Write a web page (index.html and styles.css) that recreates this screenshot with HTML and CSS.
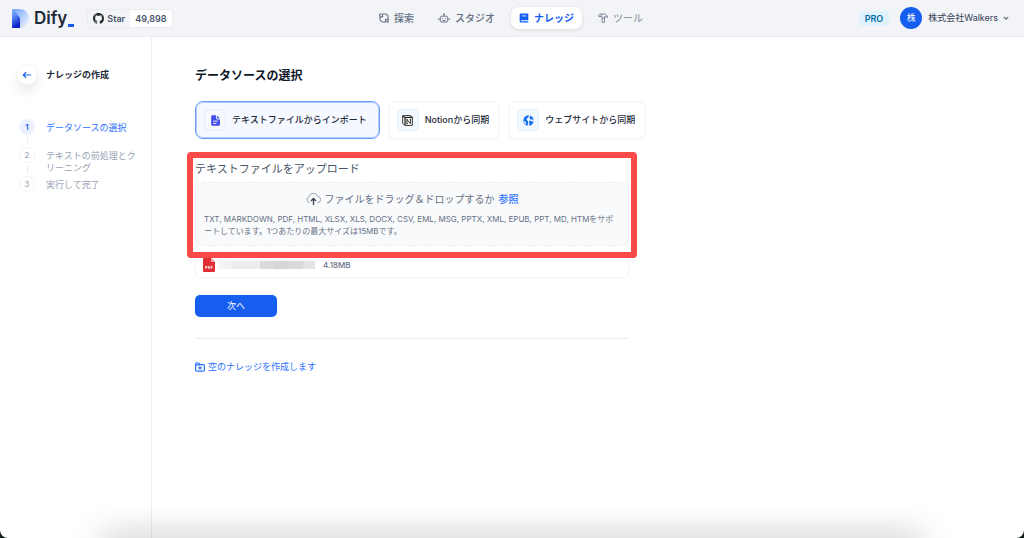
FILE: index.html
```html
<!DOCTYPE html>
<html lang="ja">
<head>
<meta charset="utf-8">
<meta name="viewport" content="width=device-width, initial-scale=1">
<title>ナレッジの作成 - Dify</title>
<link rel="stylesheet" href="styles.css">
</head>
<body>
<div class="app">
  <header class="header">
    <div class="header-side">
      <a class="logo" href="#">
        <svg class="logo-mark" viewBox="0 0 17 19" aria-hidden="true">
          <defs>
            <linearGradient id="lg1" x1="0" y1="0" x2="1" y2=".8"><stop offset="0" stop-color="#6f9ff8"/><stop offset=".5" stop-color="#a9c6fb"/><stop offset="1" stop-color="#eef3fc"/></linearGradient>
            <linearGradient id="lg2" x1="0" y1="0" x2=".3" y2="1"><stop offset="0" stop-color="#8fb5fa"/><stop offset=".45" stop-color="#5583f2"/><stop offset="1" stop-color="#0a22c8"/></linearGradient>
          </defs>
          <path d="M0 0h8a9 9 0 0 1 9 9.500a9 9 0 0 1-9 9.500z" fill="url(#lg1)"/>
          <path d="M0 0h1l7 9v10H0z" fill="url(#lg2)"/>
        </svg>
        <span class="logo-text">Dify</span><span class="logo-dash"></span>
      </a>
      <a class="star" href="#">
        <span class="star-label">
          <svg class="icon-github" viewBox="0 0 16 16" fill="#24292f" aria-hidden="true"><path d="M8 0C3.580 0 0 3.580 0 8c0 3.540 2.290 6.530 5.470 7.590.4.070.55-.17.55-.38 0-.19-.01-.82-.01-1.490-2.010.37-2.530-.49-2.690-.94-.09-.23-.48-.94-.82-1.130-.28-.15-.68-.52-.01-.53.63-.01 1.080.58 1.230.82.72 1.210 1.870.87 2.330.66.070-.52.28-.87.51-1.070-1.780-.2-3.640-.89-3.640-3.950 0-.87.31-1.590.82-2.150-.08-.2-.36-1.020.08-2.120 0 0 .67-.21 2.200.82.64-.18 1.320-.27 2-.27s1.360.09 2 .27c1.530-1.040 2.200-.82 2.200-.82.44 1.100.16 1.920.08 2.120.51.56.82 1.270.82 2.150 0 3.070-1.870 3.750-3.650 3.950.29.25.54.73.54 1.480 0 1.070-.01 1.930-.01 2.200 0 .21.15.46.55.38A8 8 0 0 0 16 8c0-4.420-3.580-8-8-8z"/></svg>
          Star
        </span>
        <span class="star-count">49,898</span>
      </a>
    </div>
    <nav class="nav">
      <a class="nav-item" href="#">
        <svg class="icon" viewBox="0 0 12 12" fill="none" stroke="currentColor" stroke-width="1.300" aria-hidden="true"><path d="M4 1.200h3.500a3.300 3.300 0 0 1 3.300 3.300V8.300M8.300 10.800H5A3.800 3.800 0 0 1 1.200 7V4.500"/><path d="M1 1.500c1.500-.8 3.500.5 3.500 2.500L2.200 5.200C.7 4 .3 2.500 1 1.500zM11.200 10.800L7.600 10.300 7.900 7.800l2.600-.3z"/></svg>
        探索
      </a>
      <a class="nav-item" href="#">
        <svg class="icon icon-wide" viewBox="0 0 14 12" fill="none" stroke="currentColor" stroke-width="1.200" aria-hidden="true"><rect x="2.500" y="3.800" width="9" height="7" rx="1.800"/><path d="M7 3.800V1.500M5.800 1.200h2.400M.8 6.300v2.200M13.200 6.300v2.200M5 6.200v1.200M9 6.200v1.200M5.500 9h3"/></svg>
        スタジオ
      </a>
      <a class="nav-item nav-active" href="#">
        <svg class="icon" viewBox="0 0 12 12" aria-hidden="true"><path d="M2.200.6h9v8.200H2.600a.5.5 0 0 0 0 1h8.600v1.600H2.300A1.600 1.600 0 0 1 .8 9.800V2A1.400 1.400 0 0 1 2.200.6z" fill="currentColor"/><path d="M4 3.500h4.500" stroke="#fff"/></svg>
        ナレッジ
      </a>
      <a class="nav-item nav-muted" href="#">
        <svg class="icon" viewBox="0 0 12 12" fill="none" stroke="currentColor" stroke-width="1.200" aria-hidden="true"><path d="M1 4.300V2.500L2.500 1.300h6L11.200 3.500v1.800L8.500 4.300H7.800v6.900H4.900V4.300zM3.800 1.300v3M5 6.300h2.800"/></svg>
        ツール
      </a>
    </nav>
    <div class="header-side header-right">
      <span class="plan">PRO</span>
      <button class="account" type="button">
        <span class="avatar">株</span>
        <span>株式会社Walkers</span>
        <svg class="icon-chevron" viewBox="0 0 8 8" fill="none" stroke="#667085" stroke-width="1.200" aria-hidden="true"><path d="M1.800 3L4 5.200 6.200 3"/></svg>
      </button>
    </div>
  </header>

  <div class="body">
    <aside class="sidebar">
      <div class="sidebar-head">
        <button class="back" type="button" aria-label="戻る">
          <svg class="icon" viewBox="0 0 12 12" fill="none" stroke="#155eef" stroke-width="1.400" aria-hidden="true"><path d="M11 6H1.500M5 2.500L1.500 6L5 9.500"/></svg>
        </button>
        <h2 class="sidebar-title">ナレッジの作成</h2>
      </div>
      <ol class="steps">
        <li class="step step-current"><span class="step-number">1</span><span class="step-text">データソースの選択</span></li>
        <li class="step"><span class="step-number">2</span><span class="step-text">テキストの前処理とクリーニング</span></li>
        <li class="step"><span class="step-number">3</span><span class="step-text">実行して完了</span></li>
      </ol>
    </aside>

    <main class="main">
      <h1 class="title">データソースの選択</h1>
      <div class="sources">
        <button class="source source-selected" type="button">
          <span class="source-icon source-icon-file"><svg viewBox="0 0 12 12" aria-hidden="true"><path d="M2.800.300h3.700v3a1.500 1.500 0 0 0 1.500 1.500h2.800v5.500a1.500 1.500 0 0 1-1.500 1.500H2.800a1.500 1.500 0 0 1-1.500-1.500V1.800A1.500 1.500 0 0 1 2.800.3zM7.500.5l3.200 3.200H7.500z" fill="#444ce7"/><path d="M3.500 6.700h5M3.500 9.200h3.500" stroke="#fff"/></svg></span>
          テキストファイルからインポート
        </button>
        <button class="source" type="button">
          <span class="source-icon"><svg viewBox="0 0 12 12" aria-hidden="true"><path d="M.7.900L8.500.4l2.800 2v8.800l-7.900.5L.7 9z" fill="#fff" stroke="#222"/><path d="M.7.900l2.600 2 8-.5M3.300 2.900v8.600" fill="none" stroke="#222" stroke-width="1.400"/><path d="M5.500 9.700V5l3.700 4.300V4.500M4.800 5.100h1.300M8.500 4.500h1.500M4.800 9.600h1.400" fill="none" stroke="#222"/></svg></span>
          Notionから同期
        </button>
        <button class="source" type="button">
          <span class="source-icon"><svg viewBox="0 0 12 12" aria-hidden="true"><circle cx="6" cy="6" r="5.600" fill="#1570ef"/><path d="M6.500 0L6 2.500 4.200 3.800 4 5.500l1.500 1.300L5.700 9 4.800 11.800 6.700 12 7 9.500 6.500 7 7.500 6l2.500 1 1.700-.5V5.300L9.500 5 7.500 4.500 7.200 2.500 8 .3zM.5 6.500l2 .5.8 1.500-.5 2" fill="#eff8ff"/></svg></span>
          ウェブサイトから同期
        </button>
      </div>

      <section class="upload">
        <div class="upload-frame">
          <h2 class="upload-label">テキストファイルをアップロード</h2>
          <div class="dropzone">
            <div class="drop-line">
              <svg class="icon-cloud" viewBox="0 0 15 14" fill="none" aria-hidden="true"><path d="M4 10.500H3.500A3 3 0 0 1 3 4.700 4.600 4.600 0 0 1 11.800 4.500 3 3 0 0 1 11.500 10.500H11" stroke="#98a2b3"/><path d="M7.500 13V6.500M5 9l2.500-2.500L10 9" stroke="#344054" stroke-width="1.300"/></svg>
              <span>ファイルをドラッグ＆ドロップするか</span>
              <a class="browse" href="#">参照</a>
            </div>
            <p class="drop-hint">TXT, MARKDOWN, PDF, HTML, XLSX, XLS, DOCX, CSV, EML, MSG, PPTX, XML, EPUB, PPT, MD, HTMをサポートしています。1つあたりの最大サイズは15MBです。</p>
          </div>
        </div>
        <div class="file">
          <svg class="icon-pdf" viewBox="0 0 12 14" aria-hidden="true"><path d="M1 0h7l4 4v9a1 1 0 0 1-1 1H1a1 1 0 0 1-1-1V1a1 1 0 0 1 1-1z" fill="#e02f32"/><path d="M8 0l4 4H8z" fill="#f4a5a6"/><path d="M2.700 10.800V8.300h1.200v1.200H2.700M5.400 8.300v2.200h.7q.7 0 .7-1.100T6.100 8.300zM8.200 10.800V8.300h1.500M8.200 9.600h1.200" fill="none" stroke="#fff" stroke-width=".8"/></svg>
          <span class="file-name"></span>
          <span class="file-size">4.18MB</span>
        </div>
      </section>

      <button class="next" type="button">次へ</button>
      <hr class="divider">
      <a class="create-empty" href="#">
        <svg class="icon" viewBox="0 0 12 12" fill="none" stroke="currentColor" stroke-width="1.400" aria-hidden="true"><path d="M.8 3.800V2a.8.8 0 0 1 .8-.8h3L6 3.200h4.200a1 1 0 0 1 1 1v5.800a1 1 0 0 1-1 1H1.800a1 1 0 0 1-1-1V3.500H6M6 5v4.200M3.900 7.100h4.200"/></svg>
        空のナレッジを作成します
      </a>
    </main>
  </div>
  <div class="bottom-shade"></div>
</div>
</body>
</html>
```
FILE: styles.css
```css
* {
  box-sizing: border-box;
}

body {
  margin: 0;
  background: #10201c;
  color: #344054;
  font-family: Inter, "Noto Sans CJK JP", sans-serif;
  font-size: 9px;
  line-height: 12px;
}

h1, h2, p, ol {
  margin: 0;
  padding: 0;
}

a {
  color: inherit;
  text-decoration: none;
}

button {
  padding: 0;
  border: 0;
  background: none;
  color: inherit;
  font: inherit;
}

svg {
  display: block;
  flex: none;
}

.app {
  position: relative;
  display: flex;
  flex-direction: column;
  min-height: 100vh;
  overflow: hidden;
  border-radius: 0 0 8px 8px;
  background: #fff;
}

.icon {
  width: 10px;
  height: 10px;
}

.icon-wide {
  width: 12px;
}

/* Header */
.header {
  display: flex;
  align-items: center;
  height: 37px;
  padding: 0 14px 0 12px;
  background: #f2f4f7;
  border-bottom: 1px solid #eaecf0;
}

.header-side {
  display: flex;
  flex: 1;
  align-items: center;
  gap: 13px;
}

.header-right {
  justify-content: flex-end;
  gap: 11px;
}

.logo {
  display: flex;
  align-items: center;
}

.logo-mark {
  width: 17px;
  height: 19px;
}

.logo-text {
  margin-left: 5px;
  color: #1d2939;
  font-size: 17px;
  font-weight: 600;
  line-height: 20px;
}

.logo-dash {
  align-self: flex-end;
  width: 6px;
  height: 3px;
  margin: 0 0 1px 1px;
  background: #155eef;
}

.star {
  display: flex;
  overflow: hidden;
  border: 1px solid #eaecf0;
  border-radius: 5px;
  font-weight: 600;
  line-height: 17px;
}

.star-label {
  display: flex;
  align-items: center;
  gap: 3px;
  padding: 0 5px;
  color: #475467;
}

.icon-github {
  width: 11px;
  height: 11px;
}

.star-count {
  padding: 0 5px;
  background: #fff;
  color: #475467;
}

.nav {
  display: flex;
  gap: 8px;
  color: #667085;
  font-weight: 500;
}

.nav-item {
  display: flex;
  align-items: center;
  gap: 5px;
  height: 22px;
  padding: 0 8px;
  border-radius: 8px;
  font-size: 10px;
}

.nav-active {
  background: #fff;
  box-shadow: 0 1px 4px #1018281a;
  color: #155eef;
  font-weight: 700;
}

.nav-muted {
  color: #7d8798;
  font-weight: 400;
}

.plan {
  padding: 0 6px;
  border-radius: 4px;
  background: #e0f2fe;
  color: #026aa2;
  font-weight: 600;
  line-height: 15px;
}

.account {
  display: flex;
  align-items: center;
  gap: 6px;
}

.account .icon-chevron {
  width: 8px;
  height: 8px;
  margin-left: -2px;
}

.avatar {
  width: 22px;
  border-radius: 50%;
  background: #155eef;
  color: #fff;
  line-height: 22px;
  text-align: center;
}

/* Page body */
.body {
  display: flex;
  flex: 1;
}

.sidebar {
  width: 152px;
  flex: none;
  padding: 28px 14px 0 17px;
  border-right: 1px solid #eaecf0;
}

.sidebar-head {
  display: flex;
  align-items: center;
  gap: 9px;
}

.back {
  display: grid;
  place-items: center;
  width: 20px;
  height: 20px;
  border-radius: 50%;
  background: #fff;
  box-shadow: 0 6px 12px #1018281a, 0 0 2px #10182812;
}

.sidebar-title {
  color: #1d2939;
  font-size: 9px;
  font-weight: 700;
}

.steps {
  display: grid;
  gap: 2px;
  margin-top: 34px;
  padding-left: 2px;
  color: #98a2b3;
  list-style: none;
}

.step {
  display: flex;
  position: relative;
  gap: 11px;
}

.step-number {
  width: 16px;
  height: 16px;
  flex: none;
  border: 1px solid #f2f4f7;
  border-radius: 50%;
  font-size: 8px;
  line-height: 14px;
  text-align: center;
}

.step-text {
  padding-top: 3px;
}

.step-current {
  min-height: 26px;
  color: #2970ff;
}

.step-current .step-number {
  border-color: #eff4ff;
  background: #eaf0ff;
  color: #155eef;
  font-weight: 600;
}

.step:not(:last-child)::after {
  position: absolute;
  top: 18px;
  bottom: 0;
  left: 8px;
  width: 1px;
  background: #eaecf0;
  content: "";
}

/* Main column */
.main {
  flex: 1;
  min-width: 0;
  padding: 31px 43px;
}

.title {
  color: #101828;
  font-size: 12px;
  font-weight: 700;
  line-height: 16px;
}

.sources {
  display: flex;
  gap: 8px;
  margin-top: 17px;
}

.source {
  display: flex;
  align-items: center;
  gap: 6px;
  height: 38px;
  padding: 0 10px 0 8px;
  border: 1px solid #f2f4f7;
  border-radius: 8px;
  background: #fff;
  box-shadow: 0 1px 1px #10182808;
  color: #1d2939;
  font-weight: 500;
}

.source-selected {
  padding-right: 12px;
  border-color: #6c9cff;
  outline: 1px solid #b2ccff;
  outline-offset: -2px;
  background: #f5f8ff;
}

.source-icon {
  display: grid;
  place-items: center;
  width: 22px;
  height: 22px;
  border: 1px solid #e4f0fd;
  border-radius: 5px;
  background: #f2f8ff;
}

.source-icon-file {
  border-color: #e6ecfd;
  background: #f5f8ff;
}

.source-icon svg {
  width: 11px;
  height: 11px;
}

.upload {
  max-width: 434px;
  margin-top: 13px;
}

.upload-frame {
  position: relative;
  z-index: 1;
  margin: 0 -8px;
  padding: 4px 2px 6px;
  border: 6px solid #fa4b48;
  border-radius: 4px;
  background: #fff;
}

.upload-label {
  color: #475467;
  font-size: 11px;
  font-weight: 400;
  line-height: 14px;
}

.dropzone {
  margin-top: 6px;
  padding: 9px 8px 8px;
  border: 1px dashed #eaecf0;
  border-radius: 8px;
  background: #f9fafb;
  color: #667085;
}

.drop-line {
  display: flex;
  align-items: center;
  justify-content: center;
  gap: 4px;
  font-size: 10px;
  line-height: 14px;
}

.icon-cloud {
  width: 15px;
  height: 14px;
}

.browse {
  color: #2970ff;
  font-weight: 500;
}

.drop-hint {
  margin-top: 7px;
  font-size: 8px;
}

.file {
  display: flex;
  align-items: center;
  gap: 4px;
  height: 28px;
  margin-top: -8px;
  padding: 2px 7px 0;
  border: 1px solid #f2f4f7;
  border-radius: 6px;
  background: #fff;
  color: #667085;
  font-size: 8px;
  font-weight: 500;
}

.icon-pdf {
  width: 12px;
  height: 14px;
}

.file-name {
  width: 96px;
  height: 8px;
  background: linear-gradient(90deg, #f3f3f3 0 13%, #ededed 13% 43%, #dadada 43% 57%, #d5d5d5 57% 71%, #d9d9d9 71% 87%, #e3e3e3 87%);
}

.file-size {
  margin-left: 4px;
}

.next {
  display: block;
  width: 82px;
  height: 22px;
  margin-top: 17px;
  border-radius: 5px;
  background: #155eef;
  color: #fff;
}

.divider {
  max-width: 434px;
  margin: 21px 0 22px;
  border: 0;
  border-top: 1px solid #eaecf0;
}

.create-empty {
  display: inline-flex;
  align-items: center;
  gap: 3px;
  color: #2970ff;
}

/* Soft shade rising from the bottom edge */
.bottom-shade {
  position: absolute;
  right: 104px;
  bottom: -10px;
  left: 104px;
  height: 10px;
  box-shadow: 0 0 32px 2px #0000004d;
  pointer-events: none;
}
```
